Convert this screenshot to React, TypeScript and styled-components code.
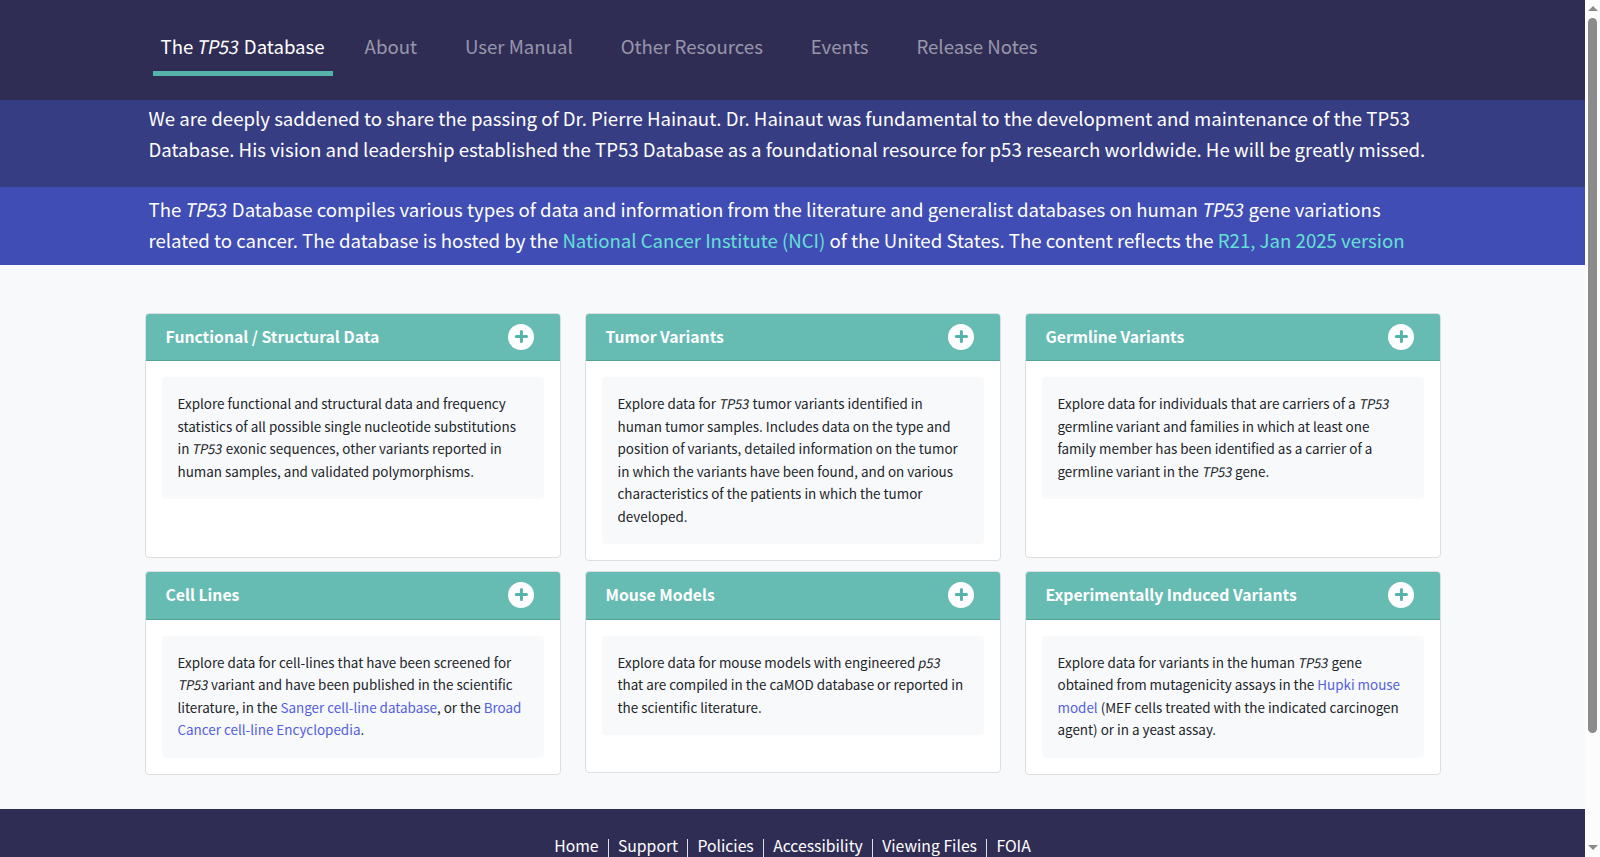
import React from "react";
import styled, { createGlobalStyle } from "styled-components";

const color = {
  navy: "#302d55",
  indigo: "#373d83",
  blue: "#404db4",
  teal: "#66bcb3",
  tealDark: "#56b3a9",
  page: "#f8f9fb",
  text: "#212529",
};

const GlobalStyle = createGlobalStyle`
  *, *::before, *::after { box-sizing: border-box; }
  html, body { margin: 0; height: 100%; overflow: hidden; }
  body {
    font-family: "Noto Sans CJK SC", "Noto Sans", sans-serif;
    color: ${color.text};
    background: ${color.page};
  }
  a { text-decoration: none; }
`;

const Window = styled.div`
  display: flex;
  height: 857px;
  overflow: hidden;
`;

const Page = styled.div`
  flex: 1;
  min-width: 0;
`;

const Container = styled.div`
  width: 1320px;
  margin: 0 auto;
  padding: 0 12px;
`;

/* Gene symbols lean gently and run slightly narrower than the text around them */
const Gene = styled.em`
  display: inline-block;
  font-style: normal;
  letter-spacing: -0.018em;
  transform: translateX(0.025em) scaleX(0.97) skewX(-11deg);
`;

/* Navigation */

const NavBar = styled.header`
  height: 100px;
  background: ${color.navy};
`;

const NavList = styled.nav`
  display: flex;
  padding: 19px 0 0 8px;
`;

const NavItem = styled.a<{ $active?: boolean }>`
  height: 57px;
  padding: 10.5px 8px 0;
  margin-right: ${(p) => (p.$active ? 24 : 32)}px;
  border-bottom: 5px solid ${(p) => (p.$active ? color.tealDark : "transparent")};
  color: ${(p) => (p.$active ? "#fff" : "rgba(255, 255, 255, 0.5)")};
  font-size: 18.62px;
  line-height: 31.2px;
  white-space: nowrap;
`;

/* Announcement and introduction bands */

const Band = styled.section<{ $tone: "indigo" | "blue" }>`
  height: ${(p) => (p.$tone === "indigo" ? 87 : 78)}px;
  padding-top: ${(p) => (p.$tone === "indigo" ? 2 : 6)}px;
  background: ${(p) => color[p.$tone]};
`;

const Lead = styled.p`
  margin: 0;
  padding: 0 4px;
  color: #fff;
  font-size: 18.635px;
  line-height: 31px;
`;

const LeadLink = styled.a`
  color: #66e0d5;
`;

/* Cards */

const CardGrid = styled.main`
  display: grid;
  grid-template-columns: repeat(3, 1fr);
  align-items: start;
  column-gap: 24px;
  row-gap: 10px;
  padding: 48px 0 34.2px;
`;

const CardBox = styled.article<{ $min: number }>`
  min-height: ${(p) => p.$min}px;
  border: 1px solid #dcdee0;
  border-radius: 4px;
  background: #fff;
  overflow: hidden;
`;

const CardHeader = styled.header`
  display: flex;
  align-items: center;
  justify-content: space-between;
  height: 47.4px;
  padding: 0 26px 0.6px 20px;
  border-bottom: 1px solid #55a399;
  background: ${color.teal};
`;

const CardTitle = styled.h2`
  margin: 0;
  color: #fff;
  font-size: 15.75px;
  font-weight: 700;
  line-height: 26px;
`;

const PlusIcon = styled.svg`
  display: block;
  width: 26px;
  height: 26px;
`;

const CardBody = styled.div`
  padding: 16px;
`;

const CardText = styled.p`
  margin: 0;
  padding: 15px 16px 17px;
  border-radius: 4px;
  background: ${color.page};
  font-size: 13.43px;
  line-height: 22.5px;
`;

const TextLink = styled.a`
  color: #5360e0;
`;

/* Footer */

const Footer = styled.footer`
  height: 120px;
  padding-top: 23px;
  background: ${color.navy};
`;

const FooterLinks = styled.nav`
  display: flex;
  justify-content: center;
  align-items: center;
`;

const FooterLink = styled.a`
  padding: 0 9px;
  color: #fff;
  font-size: 15.75px;
  line-height: 28px;

  & + & {
    position: relative;
    margin-left: 1.4px;
  }

  & + &::before {
    content: "";
    position: absolute;
    left: -1px;
    top: 7px;
    width: 1px;
    height: 19px;
    background: rgba(255, 255, 255, 0.85);
  }
`;

/* Scrollbar */

const ScrollTrack = styled.div`
  display: flex;
  flex-direction: column;
  align-items: center;
  width: 15px;
  padding: 6px 0 7px;
  background: #fcfcfc;
`;

const ScrollThumb = styled.div`
  width: 9px;
  height: 715px;
  margin-top: 7px;
  border-radius: 5px;
  background: #8b8b8b;
`;

const ScrollArrow = styled.svg`
  display: block;
  width: 10px;
  height: 5px;
  fill: #8b8b8b;

  &:last-child {
    margin-top: auto;
  }
`;

const navItems = ["About", "User Manual", "Other Resources", "Events", "Release Notes"];
const footerItems = ["Home", "Support", "Policies", "Accessibility", "Viewing Files", "FOIA"];

interface CardData {
  title: string;
  min: number;
  body: React.ReactNode;
}

const cards: CardData[] = [
  {
    title: "Functional / Structural Data",
    min: 245,
    body: (
      <>
        Explore functional and structural data and frequency statistics of all possible single
        nucleotide substitutions in <Gene>TP53</Gene> exonic sequences, other variants reported in
        human samples, and validated polymorphisms.
      </>
    ),
  },
  {
    title: "Tumor Variants",
    min: 245,
    body: (
      <>
        Explore data for <Gene>TP53</Gene> tumor variants identified in human tumor samples.
        Includes data on the type and position of variants, detailed information on the tumor in
        which the variants have been found, and on various characteristics of the patients in which
        the tumor developed.
      </>
    ),
  },
  {
    title: "Germline Variants",
    min: 245,
    body: (
      <>
        Explore data for individuals that are carriers of a <Gene>TP53</Gene> germline variant and
        families in which at least one family member has been identified as a carrier of a germline
        variant in the <Gene>TP53</Gene> gene.
      </>
    ),
  },
  {
    title: "Cell Lines",
    min: 202,
    body: (
      <>
        Explore data for cell-lines that have been screened for <Gene>TP53</Gene> variant and have
        been published in the scientific literature, in the{" "}
        <TextLink href="#sanger">Sanger cell-line database</TextLink>, or the{" "}
        <TextLink href="#broad">Broad Cancer cell-line Encyclopedia</TextLink>.
      </>
    ),
  },
  {
    title: "Mouse Models",
    min: 202,
    body: (
      <>
        Explore data for mouse models with engineered <Gene>p53</Gene> that are compiled in the
        caMOD database or reported in the scientific literature.
      </>
    ),
  },
  {
    title: "Experimentally Induced Variants",
    min: 202,
    body: (
      <>
        Explore data for variants in the human <Gene>TP53</Gene> gene obtained from mutagenicity
        assays in the <TextLink href="#hupki">Hupki mouse model</TextLink> (MEF cells treated with
        the indicated carcinogen agent) or in a yeast assay.
      </>
    ),
  },
];

function Card({ title, min, body }: CardData) {
  return (
    <CardBox $min={min}>
      <CardHeader>
        <CardTitle>{title}</CardTitle>
        <PlusIcon viewBox="0 0 26 26" aria-hidden="true">
          <circle cx="13" cy="13" r="13" fill="#fff" />
          <path
            d="M13.4 7.4v10.2M8.3 12.5h10.2"
            stroke={color.tealDark}
            strokeWidth="3"
            strokeLinecap="round"
          />
        </PlusIcon>
      </CardHeader>
      <CardBody>
        <CardText>{body}</CardText>
      </CardBody>
    </CardBox>
  );
}

export default function App() {
  return (
    <>
      <GlobalStyle />
      <Window>
        <Page>
          <NavBar>
            <Container>
              <NavList>
                <NavItem $active href="#home">
                  The <Gene>TP53</Gene> Database
                </NavItem>
                {navItems.map((item) => (
                  <NavItem key={item} href="#nav">
                    {item}
                  </NavItem>
                ))}
              </NavList>
            </Container>
          </NavBar>
          <Band $tone="indigo">
            <Container>
              <Lead>
                We are deeply saddened to share the passing of Dr. Pierre Hainaut. Dr. Hainaut was
                fundamental to the development and maintenance of the TP53 Database. His vision and
                leadership established the TP53 Database as a foundational resource for p53 research
                worldwide. He will be greatly missed.
              </Lead>
            </Container>
          </Band>
          <Band $tone="blue">
            <Container>
              <Lead>
                The <Gene>TP53</Gene> Database compiles various types of data and information from
                the literature and generalist databases on human <Gene>TP53</Gene> gene variations
                related to cancer. The database is hosted by the{" "}
                <LeadLink href="#nci">National Cancer Institute (NCI)</LeadLink> of the United
                States. The content reflects the{" "}
                <LeadLink href="#version">R21, Jan 2025 version</LeadLink>
              </Lead>
            </Container>
          </Band>
          <Container>
            <CardGrid>
              {cards.map((card) => (
                <Card key={card.title} {...card} />
              ))}
            </CardGrid>
          </Container>
          <Footer>
            <FooterLinks>
              {footerItems.map((item) => (
                <FooterLink key={item} href="#footer">
                  {item}
                </FooterLink>
              ))}
            </FooterLinks>
          </Footer>
        </Page>
        <ScrollTrack>
          <ScrollArrow viewBox="0 0 10 5">
            <path d="M5 0l5 5H0z" />
          </ScrollArrow>
          <ScrollThumb />
          <ScrollArrow viewBox="0 0 10 5">
            <path d="M0 0h10L5 5z" />
          </ScrollArrow>
        </ScrollTrack>
      </Window>
    </>
  );
}
